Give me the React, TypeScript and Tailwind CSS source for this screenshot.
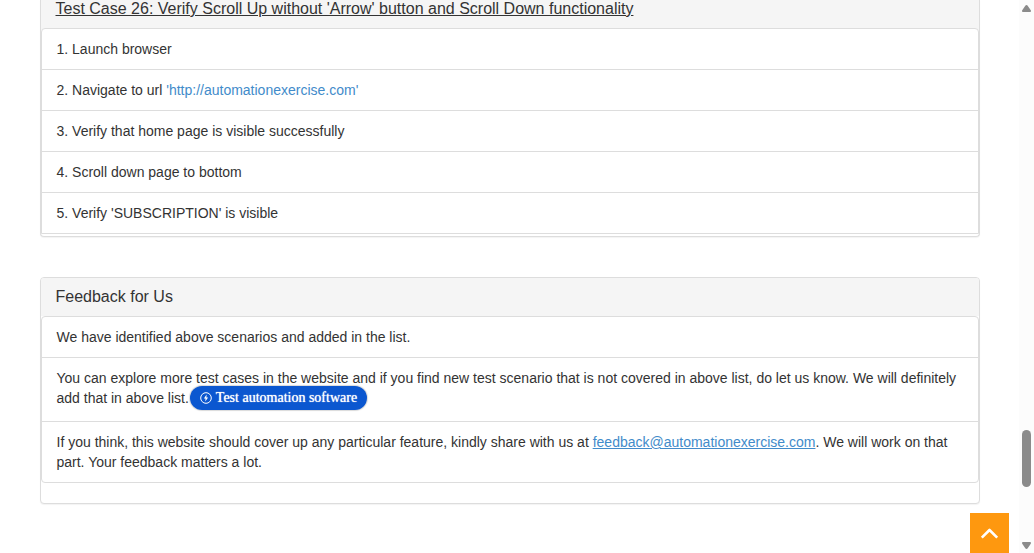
import type { ReactNode } from 'react';

function Panel({ children, className = '' }: { children: ReactNode; className?: string }) {
  return (
    <section className={`border-x border-b border-[#ddd] bg-white shadow-[0_1px_1px_rgba(0,0,0,0.05)] ${className}`}>
      {children}
    </section>
  );
}

function Item({ children, className = 'py-[10px]' }: { children: ReactNode; className?: string }) {
  return <li className={`px-[15px] ${className}`}>{children}</li>;
}

function ScrollTrack() {
  return (
    <div aria-hidden="true" className="sticky top-0 flex h-screen w-[15px] shrink-0 flex-col items-center bg-[#fcfcfc] pt-[5px] pb-1">
      <svg width="9" height="7" viewBox="0 0 9 7" fill="#8b8b8b">
        <path d="M4.5 0C5 0 5.4.2 5.7.7L8.8 5.3C9.2 6.1 8.8 7 8 7H1C.2 7-.2 6.1.2 5.3L3.3.7C3.6.2 4 0 4.5 0Z" />
      </svg>
      <div className="grow-[418]" />
      <div className="h-[57px] w-[9px] rounded-full bg-[#8b8b8b]" />
      <div className="grow-[55]" />
      <svg width="9" height="7" viewBox="0 0 9 7" fill="#8b8b8b">
        <path d="M4.5 7C5 7 5.4 6.8 5.7 6.3L8.8 1.7C9.2.9 8.8 0 8 0H1C.2 0-.2.9.2 1.7L3.3 6.3C3.6 6.8 4 7 4.5 7Z" />
      </svg>
    </div>
  );
}

const listClass = 'divide-y divide-[#ddd] border border-[#ddd] bg-white';

export default function App() {
  return (
    <div className="flex min-h-screen bg-white font-['Liberation_Sans',Arial,sans-serif] text-[14px] leading-5 text-[#333]">
      <main className="min-w-0 flex-1">
        <div className="mx-auto max-w-[970px] px-[15px]">
          <Panel className="mb-10 rounded-b-[4px] pb-[2px]">
            <h4 className="bg-[#f5f5f5] px-[15px] pb-[10px] text-[16px] leading-[18px]">
              <a href="#case26" className="underline">
                Test Case 26: Verify Scroll Up without 'Arrow' button and Scroll Down functionality
              </a>
            </h4>
            <div className="bg-[#f5f5f5]">
              <ul className={`${listClass} rounded-t-[4px]`}>
                <Item>1. Launch browser</Item>
                <Item>
                  2. Navigate to url{' '}
                  <a href="http://automationexercise.com" className="text-[#428bca]">
                    'http://automationexercise.com'
                  </a>
                </Item>
                <Item>3. Verify that home page is visible successfully</Item>
                <Item>4. Scroll down page to bottom</Item>
                <Item>5. Verify 'SUBSCRIPTION' is visible</Item>
              </ul>
            </div>
          </Panel>

          <Panel className="rounded-[4px] border-t pb-5">
            <h4 className="rounded-t-[3px] bg-[#f5f5f5] px-[15px] py-[10px] text-[16px] leading-[18px]">
              Feedback for Us
            </h4>
            <ul className={`${listClass} rounded-[4px]`}>
              <Item>We have identified above scenarios and added in the list.</Item>
              <Item className="pt-[10px] pb-[13px]">
                You can explore more test cases in the website and if you find new test scenario that is not covered in
                above list, do let us know. We will definitely add that in above list.
                <a
                  href="#software"
                  className="-mt-[5px] -mb-[3px] ml-px inline-flex h-6 items-center gap-1 rounded-full bg-[#0b57d0] px-[10px] align-middle font-['Liberation_Serif',serif] text-[14px] text-white shadow-[0_0_1px_1px_rgba(0,0,0,0.15)] [text-shadow:0_0_1px_white]"
                >
                  <svg width="12" height="12" viewBox="0 0 12 12" fill="none">
                    <circle cx="6" cy="6" r="5.3" stroke="white" strokeWidth="1" />
                    <path d="M6.6 2.6 3.9 6.6H5.5L5.3 9.4 8.1 5.4H6.4Z" fill="white" />
                  </svg>
                  Test automation software
                </a>
              </Item>
              <Item>
                If you think, this website should cover up any particular feature, kindly share with us at{' '}
                <a href="mailto:feedback@automationexercise.com" className="text-[#428bca] underline">
                  feedback@automationexercise.com
                </a>
                . We will work on that part. Your feedback matters a lot.
              </Item>
            </ul>
          </Panel>
        </div>
      </main>

      <ScrollTrack />

      <button
        type="button"
        aria-label="Scroll to top"
        className="fixed right-[25px] bottom-0 flex h-10 w-[39px] items-center justify-center bg-[#fe980f]"
      >
        <svg width="19" height="12" viewBox="0 0 19 12" fill="none" stroke="white" strokeWidth="2.6">
          <path d="M1.8 10.6 9.5 3 17.2 10.6" strokeLinejoin="round" />
        </svg>
      </button>
    </div>
  );
}
